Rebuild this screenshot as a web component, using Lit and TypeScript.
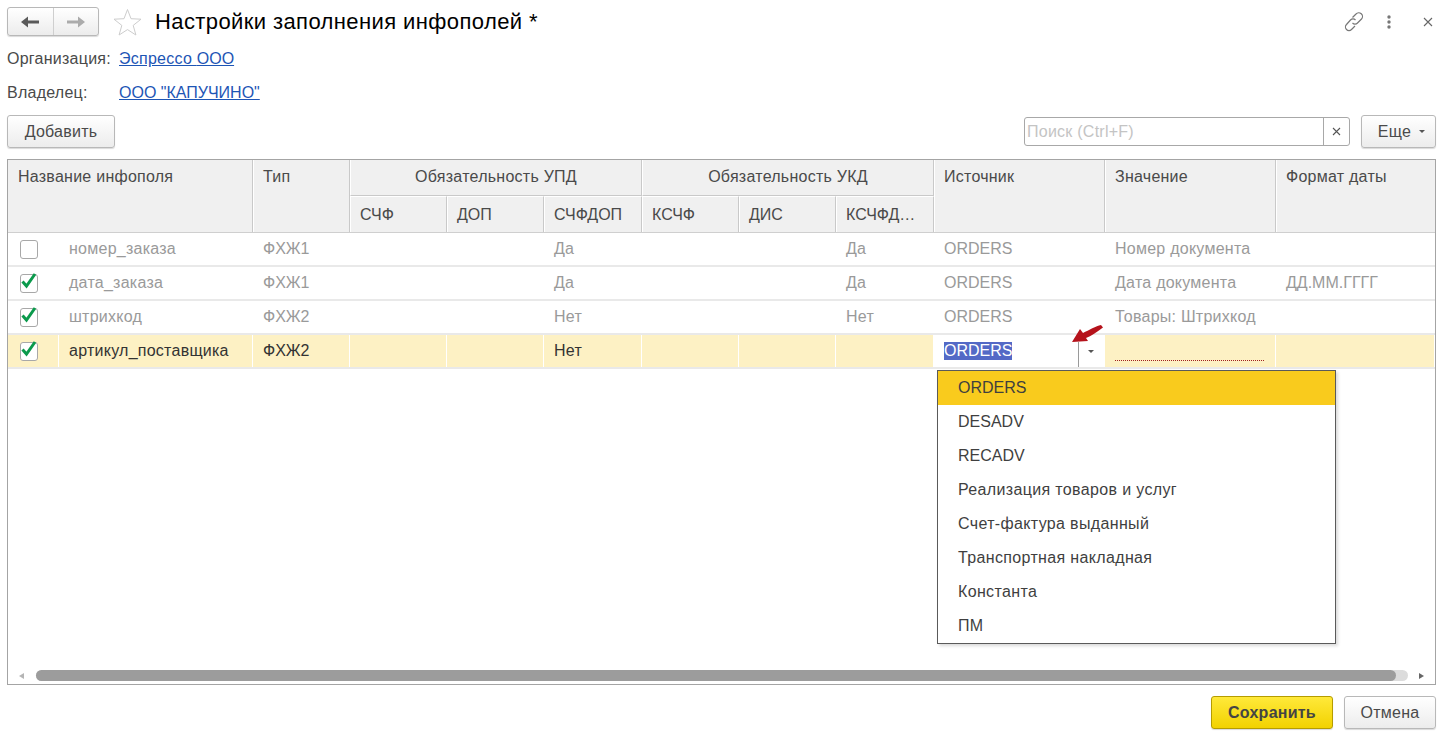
import { LitElement, css, html, svg } from 'lit';
import { customElement } from 'lit/decorators.js';

const ROWS = [
    { on: false, name: 'номер_заказа', type: 'ФХЖ1', upd: 'Да', ukd: 'Да', src: 'ORDERS', val: 'Номер документа', fmt: '' },
    { on: true, name: 'дата_заказа', type: 'ФХЖ1', upd: 'Да', ukd: 'Да', src: 'ORDERS', val: 'Дата документа', fmt: 'ДД.ММ.ГГГГ' },
    { on: true, name: 'штрихкод', type: 'ФХЖ2', upd: 'Нет', ukd: 'Нет', src: 'ORDERS', val: 'Товары: Штрихкод', fmt: '' },
];

const OPTIONS = ['ORDERS', 'DESADV', 'RECADV', 'Реализация товаров и услуг', 'Счет-фактура выданный', 'Транспортная накладная', 'Константа', 'ПМ'];

const checkMark = svg`<path d="M3.5 9.5 L7.5 14 L16 2" fill="none" stroke="#0b9a4c" stroke-width="3"/>`;

@customElement('app-root')
export class AppRoot extends LitElement {
    static styles = css`
    :host {
        display: flex;
        flex-direction: column;
        height: 737px;
        padding: 7px 8px 8px 7px;
        box-sizing: border-box;
        background: #fff;
        font-family: "Liberation Sans", Arial, sans-serif;
        font-size: 16px;
        letter-spacing: 0.25px;
        color: #4a4a4a;
        overflow: hidden;
    }

    .up {
        letter-spacing: 0;
    }

    .btn {
        display: flex;
        align-items: center;
        justify-content: center;
        box-sizing: border-box;
        height: 33px;
        border: 1px solid #b8b8b8;
        border-radius: 3px;
        background: linear-gradient(#fff, #ececec);
        box-shadow: 0 1px 1px rgba(0, 0, 0, 0.15);
        color: #4a4a4a;
    }

    .title-bar {
        display: flex;
        align-items: center;
        height: 29px;
    }
    .nav {
        display: flex;
        box-sizing: border-box;
        width: 92px;
        height: 29px;
        border: 1px solid #b8b8b8;
        border-radius: 3px;
        background: linear-gradient(#fff, #ececec);
        box-shadow: 0 1px 1px rgba(0, 0, 0, 0.15);
    }
    .nav div {
        flex: 1;
        display: flex;
        align-items: center;
        justify-content: center;
    }
    .nav div + div {
        border-left: 1px solid #cfcfcf;
    }
    .star {
        margin-left: 14px;
        margin-right: 13px;
    }
    h1 {
        margin: 0;
        font-size: 22px;
        font-weight: normal;
        letter-spacing: 0.4px;
        color: #000;
        flex: 1;
    }
    .tools {
        display: flex;
        align-items: center;
    }
    .tools svg {
        display: block;
    }
    .dots {
        margin-left: 21px;
    }
    .close {
        margin: 0 3px 0 31px;
    }

    .field {
        display: flex;
        align-items: center;
        height: 34px;
    }
    .org {
        margin-top: 6px;
    }
    .field label {
        width: 112px;
    }
    .field a {
        color: #1d55b5;
        text-decoration: underline;
    }

    .actions {
        display: flex;
        align-items: center;
        margin-top: 5px;
        height: 33px;
    }
    .add {
        width: 108px;
    }
    .search {
        display: flex;
        box-sizing: border-box;
        width: 326px;
        height: 29px;
        margin-left: auto;
        border: 1px solid #a8a8a8;
        border-radius: 3px;
    }
    .search span {
        flex: 1;
        padding-left: 2px;
        line-height: 27px;
        color: #c4c4c4;
    }
    .search div {
        width: 25px;
        border-left: 1px solid #a8a8a8;
        display: flex;
        align-items: center;
        justify-content: center;
    }
    .more {
        width: 75px;
        margin-left: 11px;
        gap: 8px;
        padding-left: 6px;
    }
    .caret {
        width: 0;
        height: 0;
        border-left: 3px solid transparent;
        border-right: 3px solid transparent;
        border-top: 3px solid #555;
    }

    .table {
        position: relative;
        flex: 1;
        display: flex;
        flex-direction: column;
        margin-top: 11px;
        border: 1px solid #a4a4a4;
        min-height: 0;
    }
    .head {
        display: grid;
        grid-template-columns: 245px 97px 97px 97px 98px 97px 97px 98px 171px 171px 1fr;
        grid-template-rows: 36px 36px;
        border-bottom: 1px solid #cfcfcf;
    }
    .hc {
        box-sizing: border-box;
        background: #f0f0f0;
        border-right: 1px solid #c9c9c9;
        border-left: 1px solid #fff;
        padding: 7px 9px 0;
        line-height: 19px;
        white-space: nowrap;
        overflow: hidden;
    }
    .hc:first-child {
        border-left: 0;
        padding-left: 10px;
    }
    .tall {
        grid-row: span 2;
    }
    .tall.last {
        border-right: 0;
    }
    .group {
        grid-column: span 3;
        text-align: center;
        border-bottom: 1px solid #c9c9c9;
    }
    .sub {
        padding-top: 8px;
        border-top: 1px solid #fff;
    }

    .row {
        display: grid;
        grid-template-columns: 51px 194px 97px 97px 97px 98px 97px 97px 98px 171px 171px 1fr;
        height: 34px;
        box-sizing: border-box;
        border-bottom: 2px solid #e9e9e9;
        color: #9a9a9a;
    }
    .c {
        box-sizing: border-box;
        padding: 0 10px;
        line-height: 32px;
        white-space: nowrap;
        overflow: hidden;
    }
    .c.box {
        padding: 5px 0 0 11px;
    }
    .row.cur {
        color: #333;
    }
    .row.cur .c {
        background: #fdf1c4;
        border-right: 1px solid #fff;
    }
    .row.cur .c.edit {
        position: relative;
        background: #fff;
    }
    .edit mark {
        background: #5369c6;
        color: #fff;
        display: inline-block;
        line-height: 18px;
    }
    .edit i {
        position: absolute;
        left: 144px;
        top: 7px;
        bottom: 0;
        border-left: 1px solid #9a9a9a;
    }
    .edit .caret {
        position: absolute;
        left: 154px;
        top: 15px;
    }
    .dotted {
        margin-top: 25px;
        margin-right: 1px;
        border-bottom: 1px dotted #a02020;
    }
    .check {
        display: block;
    }

    .pop {
        position: absolute;
        left: 929px;
        top: 210px;
        width: 399px;
        box-sizing: border-box;
        border: 1px solid #5a5a5a;
        background: #fff;
        box-shadow: 2px 2px 3px rgba(0, 0, 0, 0.15);
        letter-spacing: 0.35px;
        z-index: 2;
    }
    .pop div {
        height: 34px;
        line-height: 34px;
        padding-left: 20px;
        color: #3f3f3f;
    }
    .pop div.sel {
        background: #f9cb1d;
    }
    .pointer {
        position: absolute;
        left: 1062px;
        top: 163px;
        z-index: 3;
    }

    .scroll {
        display: flex;
        align-items: center;
        margin-top: auto;
        height: 11px;
        margin-bottom: 3px;
        padding-left: 11px;
        padding-right: 11px;
    }
    .scroll .left {
        border-top: 3px solid transparent;
        border-bottom: 3px solid transparent;
        border-right: 5px solid #b5b5b5;
    }
    .scroll .right {
        border-top: 3px solid transparent;
        border-bottom: 3px solid transparent;
        border-left: 5px solid #666;
    }
    .track {
        flex: 1;
        height: 11px;
        margin: 0 11px 0 12px;
        border-radius: 6px;
        background: #dcdcdc;
    }
    .thumb {
        height: 100%;
        width: 1360px;
        border-radius: 6px;
        background: #9c9c9c;
    }

    .footer {
        display: flex;
        justify-content: flex-end;
        gap: 11px;
        margin-top: 11px;
    }
    .save {
        width: 122px;
        border-color: #b59c00;
        background: linear-gradient(#ffe93a, #f2d200);
        font-weight: bold;
        color: #444;
    }
    .cancel {
        width: 92px;
    }
    `;

    renderCheck(on: boolean) {
        return html`<svg class="check" width="20" height="22" viewBox="0 0 20 22">
            <rect x="1.5" y="2.5" width="17" height="18" rx="2.5" fill="#fff" stroke="#a8a8a8"/>
            ${on ? checkMark : ''}
        </svg>`;
    }

    render() {
        return html`
        <div class="title-bar">
            <div class="nav">
                <div><svg width="18" height="12" viewBox="0 0 18 12"><path d="M0 6 L7 0.5 V4.5 H18 V7.5 H7 V11.5 Z" fill="#5a5a5a"/></svg></div>
                <div><svg width="18" height="12" viewBox="0 0 18 12"><path d="M18 6 L11 0.5 V4.5 H0 V7.5 H11 V11.5 Z" fill="#ababab"/></svg></div>
            </div>
            <svg class="star" width="29" height="28" viewBox="0 0 29 28"><path d="M14.5 1.5 L18 10.7 L28 11.2 L20.2 17.4 L22.9 27 L14.5 21.6 L6.1 27 L8.8 17.4 L1 11.2 L11 10.7 Z" fill="#fff" stroke="#cdcdcd"/></svg>
            <h1>Настройки заполнения инфополей *</h1>
            <div class="tools">
                <svg width="22" height="22" viewBox="0 0 22 22" fill="none" stroke="#777" stroke-width="1.2">
                    <path d="M9.5 6.5 L13 3 a3.5 3.5 0 0 1 5.5 5 L14.5 12 a3.5 3.5 0 0 1 -5 0"/>
                    <path d="M12.5 9 a3.5 3.5 0 0 0 -5 0 L3.5 13.5 a3.5 3.5 0 0 0 5 5 L12 15"/>
                </svg>
                <svg class="dots" width="6" height="14" viewBox="0 0 6 14" fill="#777"><circle cx="3" cy="2" r="1.7"/><circle cx="3" cy="7" r="1.7"/><circle cx="3" cy="12" r="1.7"/></svg>
                <svg class="close" width="10" height="10" viewBox="0 0 10 10" stroke="#666" stroke-width="1.1"><path d="M1 1 L9 9 M9 1 L1 9"/></svg>
            </div>
        </div>

        <div class="field org"><label>Организация:</label><a>Эспрессо <span class="up">ООО</span></a></div>
        <div class="field"><label>Владелец:</label><a class="up">ООО "КАПУЧИНО"</a></div>

        <div class="actions">
            <div class="btn add">Добавить</div>
            <div class="search">
                <span>Поиск (Ctrl+F)</span>
                <div><svg width="9" height="9" viewBox="0 0 9 9" stroke="#555" stroke-width="1.1"><path d="M1 1 L8 8 M8 1 L1 8"/></svg></div>
            </div>
            <div class="btn more">Еще <span class="caret"></span></div>
        </div>

        <div class="table">
            <div class="head">
                <div class="hc tall">Название инфополя</div>
                <div class="hc tall">Тип</div>
                <div class="hc group">Обязательность УПД</div>
                <div class="hc group">Обязательность УКД</div>
                <div class="hc tall">Источник</div>
                <div class="hc tall">Значение</div>
                <div class="hc tall last">Формат даты</div>
                ${['СЧФ', 'ДОП', 'СЧФДОП', 'КСЧФ', 'ДИС', 'КСЧФД…'].map((t) => html`<div class="hc sub up">${t}</div>`)}
            </div>

            ${ROWS.map((r) => html`
            <div class="row">
                <div class="c box">${this.renderCheck(r.on)}</div>
                <div class="c">${r.name}</div>
                <div class="c up">${r.type}</div>
                <div class="c"></div>
                <div class="c"></div>
                <div class="c">${r.upd}</div>
                <div class="c"></div>
                <div class="c"></div>
                <div class="c">${r.ukd}</div>
                <div class="c up">${r.src}</div>
                <div class="c">${r.val}</div>
                <div class="c up">${r.fmt}</div>
            </div>`)}

            <div class="row cur">
                <div class="c box">${this.renderCheck(true)}</div>
                <div class="c">артикул_поставщика</div>
                <div class="c up">ФХЖ2</div>
                <div class="c"></div>
                <div class="c"></div>
                <div class="c">Нет</div>
                <div class="c"></div>
                <div class="c"></div>
                <div class="c"></div>
                <div class="c edit up"><mark>ORDERS</mark><i></i><span class="caret"></span></div>
                <div class="c"><div class="dotted"></div></div>
                <div class="c"></div>
            </div>

            <div class="scroll">
                <span class="left"></span>
                <div class="track"><div class="thumb"></div></div>
                <span class="right"></span>
            </div>

            <div class="pop">
                ${OPTIONS.map((o, i) => html`<div class="${i === 0 ? 'sel up' : i < 3 ? 'up' : ''}">${o}</div>`)}
            </div>
            <svg class="pointer" width="34" height="20" viewBox="0 0 34 20"><path d="M2 19 L10 6 L13 10 C19 7 26 3 31 2 L33 4.5 C27 9 21 13 16 15 L18 18 Z" fill="#b5121b"/></svg>
        </div>

        <div class="footer">
            <div class="btn save">Сохранить</div>
            <div class="btn cancel">Отмена</div>
        </div>
        `;
    }
}
